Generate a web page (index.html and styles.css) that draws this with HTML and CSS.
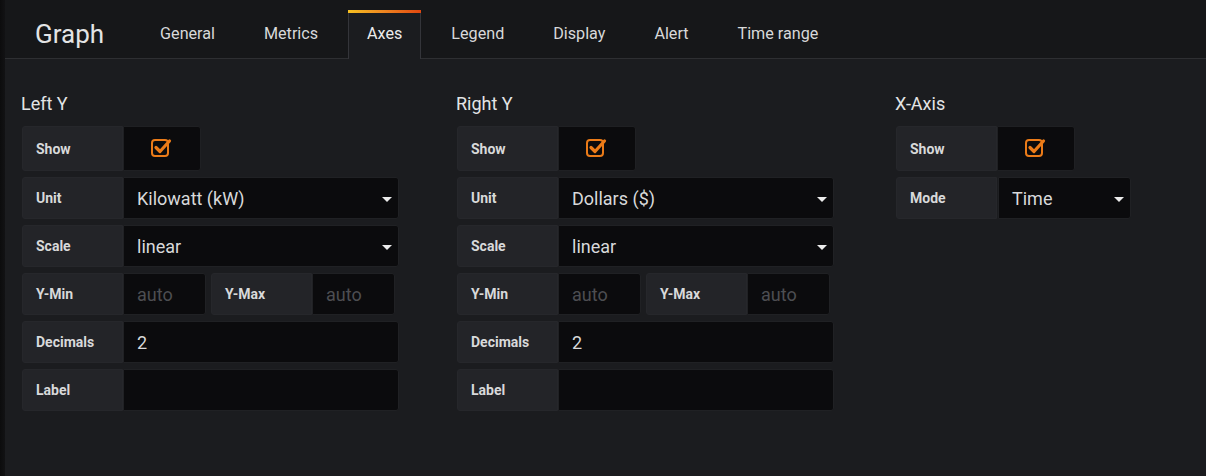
FILE: index.html
```html
<!DOCTYPE html>
<html>
<head>
<meta charset="utf-8">
<link rel="stylesheet" href="styles.css">
</head>
<body>
<div class="app">
  <div class="strip"></div>
  <div class="main">
    <header class="tabbar">
      <div class="title">Graph</div>
      <nav class="tabs">
        <div class="tab">General</div>
        <div class="tab">Metrics</div>
        <div class="tab active">Axes</div>
        <div class="tab">Legend</div>
        <div class="tab">Display</div>
        <div class="tab">Alert</div>
        <div class="tab">Time range</div>
      </nav>
    </header>
    <div class="content">
      <section class="col col-a">
        <h3 class="sec-title">Left Y</h3>
        <div class="row tall">
          <div class="lbl">Show</div>
          <div class="chk"><svg width="24" height="22" viewBox="0 0 24 22"><rect x="2" y="4" width="16" height="16" rx="3" fill="none" stroke="#eb7b18" stroke-width="2"/><path d="M6 11.5 L10 15.5 L19.5 5" fill="none" stroke="#eb7b18" stroke-width="3.2" stroke-linecap="round" stroke-linejoin="round"/></svg></div>
        </div>
        <div class="row">
          <div class="lbl">Unit</div>
          <div class="inp sel w275">Kilowatt (kW)<span class="caret"></span></div>
        </div>
        <div class="row">
          <div class="lbl">Scale</div>
          <div class="inp sel w275">linear<span class="caret"></span></div>
        </div>
        <div class="row">
          <div class="lbl">Y-Min</div>
          <div class="inp ph w83">auto</div>
          <div class="lbl ml">Y-Max</div>
          <div class="inp ph w82">auto</div>
        </div>
        <div class="row">
          <div class="lbl">Decimals</div>
          <div class="inp w275">2</div>
        </div>
        <div class="row">
          <div class="lbl">Label</div>
          <div class="inp w275"></div>
        </div>
      </section>
      <section class="col col-b">
        <h3 class="sec-title">Right Y</h3>
        <div class="row tall">
          <div class="lbl">Show</div>
          <div class="chk"><svg width="24" height="22" viewBox="0 0 24 22"><rect x="2" y="4" width="16" height="16" rx="3" fill="none" stroke="#eb7b18" stroke-width="2"/><path d="M6 11.5 L10 15.5 L19.5 5" fill="none" stroke="#eb7b18" stroke-width="3.2" stroke-linecap="round" stroke-linejoin="round"/></svg></div>
        </div>
        <div class="row">
          <div class="lbl">Unit</div>
          <div class="inp sel w275">Dollars ($)<span class="caret"></span></div>
        </div>
        <div class="row">
          <div class="lbl">Scale</div>
          <div class="inp sel w275">linear<span class="caret"></span></div>
        </div>
        <div class="row">
          <div class="lbl">Y-Min</div>
          <div class="inp ph w83">auto</div>
          <div class="lbl ml">Y-Max</div>
          <div class="inp ph w82">auto</div>
        </div>
        <div class="row">
          <div class="lbl">Decimals</div>
          <div class="inp w275">2</div>
        </div>
        <div class="row">
          <div class="lbl">Label</div>
          <div class="inp w275"></div>
        </div>
      </section>
      <section class="col col-c">
        <h3 class="sec-title">X-Axis</h3>
        <div class="row tall">
          <div class="lbl">Show</div>
          <div class="chk"><svg width="24" height="22" viewBox="0 0 24 22"><rect x="2" y="4" width="16" height="16" rx="3" fill="none" stroke="#eb7b18" stroke-width="2"/><path d="M6 11.5 L10 15.5 L19.5 5" fill="none" stroke="#eb7b18" stroke-width="3.2" stroke-linecap="round" stroke-linejoin="round"/></svg></div>
        </div>
        <div class="row">
          <div class="lbl">Mode</div>
          <div class="inp sel w132 gap1">Time<span class="caret"></span></div>
        </div>
      </section>
    </div>
  </div>
</div>
</body>
</html>
```

FILE: styles.css
```css
html, body {
  margin: 0;
  padding: 0;
  background: #1b1c1f;
  width: 1206px;
  height: 476px;
  overflow: hidden;
}
.app {
  display: flex;
  height: 476px;
  font-family: Roboto, "Liberation Sans", sans-serif;
  color: #d8d9da;
}
.strip {
  width: 5px;
  flex: 0 0 5px;
  background: linear-gradient(to right, #0c0c0d, #121214);
}
.main {
  flex: 1;
  display: flex;
  flex-direction: column;
  background: #1b1c1f;
}
.tabbar {
  height: 59px;
  box-sizing: border-box;
  display: flex;
  align-items: flex-end;
  background: #161719;
  border-bottom: 1px solid #2e2f32;
  padding-left: 30px;
}
.title {
  font-size: 26px;
  line-height: 48px;
  height: 48px;
  color: #e3e4e5;
  margin-right: 37px;
}
.tabs {
  display: flex;
  gap: 11px;
  height: 48px;
}
.tab {
  padding: 0 19px;
  font-size: 16.15px;
  line-height: 48px;
  height: 48px;
  box-sizing: border-box;
  color: #d8d9da;
  position: relative;
}
.tab.active {
  background: #1b1c1f;
  border-left: 1px solid #34353a;
  border-right: 1px solid #34353a;
  padding: 0 18px;
  height: 49px;
  margin-bottom: -1px;
  color: #ececec;
}
.tab.active::before {
  content: "";
  position: absolute;
  left: -1px;
  right: -1px;
  top: 0;
  height: 3px;
  background: linear-gradient(to right, #f6c021, #ee8420 50%, #e2470f);
}
.content {
  display: grid;
  grid-template-columns: 435px 439px auto;
  padding: 0 0 0 16px;
}
.sec-title {
  margin: 0;
  font-weight: 400;
  font-size: 18px;
  line-height: 22px;
  padding-top: 34px;
  padding-bottom: 11px;
  color: #e3e4e5;
}
.row {
  display: flex;
  height: 42px;
  margin-bottom: 6px;
  box-sizing: border-box;
}
.row.tall {
  height: 45px;
}
.lbl {
  width: 101px;
  box-sizing: border-box;
  background: #232428;
  border: 1px solid #26272b;
  border-radius: 3px 0 0 3px;
  font-size: 14px;
  font-weight: 700;
  padding-left: 13px;
  display: flex;
  align-items: center;
  color: #d8d9da;
  margin-left: 1px;
}
.lbl.ml {
  margin-left: 5px;
}
.chk {
  width: 78px;
  background: #0b0b0d;
  border: 1px solid #1f2023;
  border-radius: 0 3px 3px 0;
  display: flex;
  align-items: center;
  justify-content: center;
  box-sizing: border-box;
}
.chk svg {
  margin-top: -3px;
}
.inp {
  background: #0b0b0d;
  border: 1px solid #202124;
  border-radius: 0 3px 3px 0;
  box-sizing: border-box;
  font-size: 18px;
  padding-left: 13px;
  display: flex;
  align-items: center;
  position: relative;
  color: #d8d9da;
}
.inp.ph {
  color: #4d4e52;
}
.w275 { width: 276px; }
.w83 { width: 83px; }
.w82 { width: 83px; }
.w132 { width: 133px; }
.gap1 { margin-left: 1px; }
.caret {
  position: absolute;
  right: 6px;
  top: 50%;
  margin-top: -1px;
  width: 0;
  height: 0;
  border-left: 5px solid transparent;
  border-right: 5px solid transparent;
  border-top: 5px solid #ececec;
}
```
